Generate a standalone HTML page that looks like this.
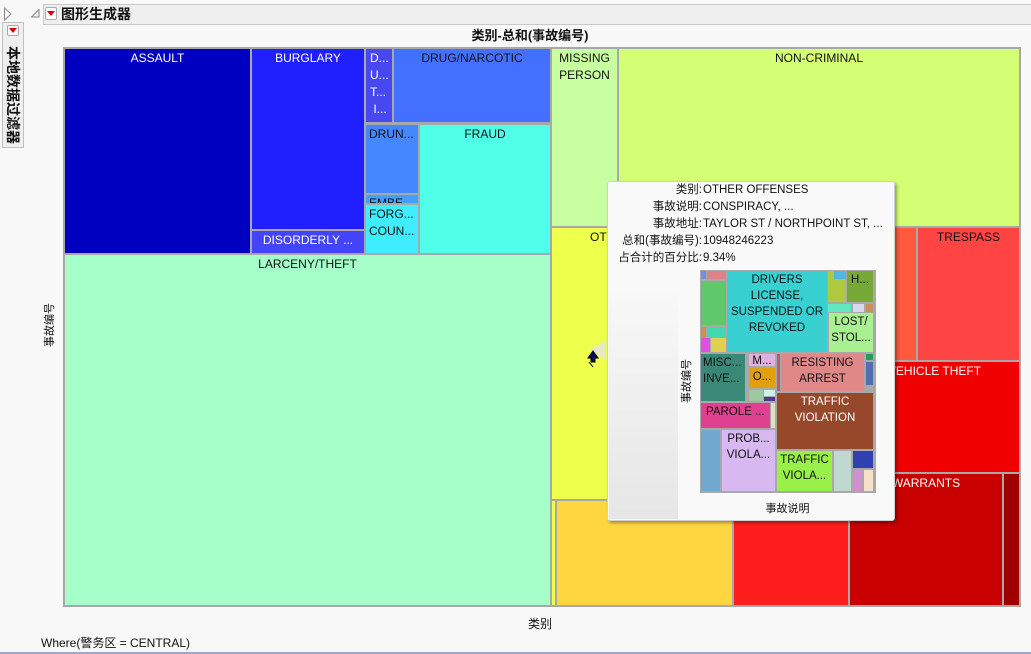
<!DOCTYPE html>
<html><head><meta charset="utf-8"><style>
*{margin:0;padding:0;box-sizing:border-box}
body{width:1031px;height:654px;background:#f8f8f8;position:relative;overflow:hidden;font-family:"Liberation Sans","Noto Sans CJK SC",sans-serif;font-size:12px;color:#111}
.a{position:absolute}
.c{position:absolute;text-align:center;line-height:17px;padding-top:1px;overflow:hidden;white-space:nowrap}
.w{color:#fff}
.t{font-size:11.5px;line-height:16px}
</style></head><body>
<!-- header -->
<svg class="a" style="left:3px;top:7px" width="10" height="14"><path d="M1.5 1 L8 7 L1.5 13 Z" fill="#fff" stroke="#888"/></svg>
<div class="a" style="left:43px;top:4px;width:990px;height:21px;background:#efefef;border:1px solid #c8c8c8"></div>
<svg class="a" style="left:31px;top:9px" width="9" height="9"><path d="M8 0.5 L8 8 L0.5 8 Z" fill="#eee" stroke="#888"/></svg>
<div class="a" style="left:45px;top:7px;width:12px;height:13px;background:#fff;border:1px solid #aaa;border-radius:2px"></div>
<div class="a" style="left:47px;top:11px;width:0;height:0;border-top:5px solid #d00;border-left:4px solid transparent;border-right:4px solid transparent"></div>
<div class="a" style="left:61px;top:5px;font-size:14px;font-weight:bold;line-height:18px">图形生成器</div>
<!-- left filter button -->
<div class="a" style="left:2px;top:22px;width:22px;height:126px;background:#efefef;border:1px solid #c0c0c0"></div>
<div class="a" style="left:7px;top:25px;width:12px;height:11px;background:#fff;border:1px solid #aaa;border-radius:2px"></div>
<div class="a" style="left:9px;top:28px;width:0;height:0;border-top:5px solid #d00;border-left:4px solid transparent;border-right:4px solid transparent"></div>
<div class="a" style="left:-42px;top:80px;width:110px;height:18px;font-size:14px;font-weight:bold;line-height:18px;transform:rotate(90deg);white-space:nowrap;text-align:right">本地数据过滤器</div>
<!-- title -->
<div class="a" style="left:300px;top:27px;width:460px;text-align:center;font-size:13px;font-weight:bold;line-height:18px">类别-总和(事故编号)</div>
<!-- plot -->
<div class="a" style="left:63px;top:47px;width:958px;height:560px;background:#a8a8a8"></div>
<div class="c w" style="left:65px;top:49px;width:185px;height:204px;background:#0000c0">ASSAULT</div>
<div class="c w" style="left:252px;top:49px;width:112px;height:180px;background:#2020ff">BURGLARY</div>
<div class="c w" style="left:252px;top:231px;width:112px;height:22px;background:#4444ff">DISORDERLY ...</div>
<div class="c w" style="left:366px;top:49px;width:26px;height:73px;background:#4848f0;text-align:left;padding-left:4px">D...<br>U...<br>T...<br>&nbsp;I...</div>
<div class="c" style="left:394px;top:49px;width:156px;height:73px;background:#4470ff">DRUG/NARCOTIC</div>
<div class="c" style="left:366px;top:125px;width:52px;height:68px;background:#4488ff;text-align:left;padding-left:3px">DRUN...</div>
<div class="c" style="left:366px;top:195px;width:52px;height:8px;background:#44a0ff;line-height:14px;text-align:left;padding-left:3px">EMBE</div>
<div class="c" style="left:366px;top:205px;width:52px;height:48px;background:#40ecff;text-align:left;padding-left:3px">FORG...<br>COUN...</div>
<div class="c" style="left:420px;top:125px;width:130px;height:128px;background:#50ffe8">FRAUD</div>
<div class="c" style="left:65px;top:255px;width:485px;height:350px;background:#a4ffc8">LARCENY/THEFT</div>
<div class="c" style="left:552px;top:49px;width:65px;height:177px;background:#c8ffa0">MISSING<br>PERSON</div>
<div class="c" style="left:619px;top:49px;width:400px;height:177px;background:#d4ff74">NON-CRIMINAL</div>
<div class="c" style="left:552px;top:228px;width:340px;height:271px;background:#eeff4c;text-align:left;padding-left:38px">OTHER</div>
<div class="c" style="left:894px;top:228px;width:22px;height:132px;background:#ff5a3c"></div>
<div class="c" style="left:918px;top:228px;width:101px;height:132px;background:#ff4444">TRESPASS</div>
<div class="c w" style="left:850px;top:362px;width:169px;height:110px;background:#f00000">VEHICLE THEFT</div>
<div class="c w" style="left:850px;top:474px;width:152px;height:131px;background:#c80000">WARRANTS</div>
<div class="c" style="left:1004px;top:474px;width:15px;height:131px;background:#a00000"></div>
<div class="c" style="left:552px;top:501px;width:3px;height:104px;background:#eeff4c"></div>
<div class="c" style="left:557px;top:501px;width:175px;height:104px;background:#ffd640"></div>
<div class="c" style="left:734px;top:501px;width:114px;height:104px;background:#ff1e1e"></div>
<!-- axis labels -->
<div class="a" style="left:20px;top:318px;width:60px;text-align:center;transform:rotate(-90deg);font-size:11px;line-height:14px">事故编号</div>
<div class="a" style="left:520px;top:615px;width:40px;text-align:center;font-size:12px">类别</div>
<div class="a" style="left:41px;top:634px;font-size:12px">Where(警务区 = CENTRAL)</div>
<div class="a" style="left:0;top:652px;width:1031px;height:2px;background:#a0a8c8"></div>
<!-- tooltip -->
<div class="a" style="left:590px;top:340px;width:0;height:0;border-right:16px solid #e8e8c8;border-top:10px solid transparent;border-bottom:10px solid transparent"></div>
<div class="a" style="left:607px;top:181px;width:288px;height:340px;background:#f9f9f9;border:1px solid #d0d0d0;border-radius:3px;box-shadow:2px 2px 3px rgba(0,0,0,.35)"></div>
<div class="a" style="left:609px;top:290px;width:69px;height:229px;background:linear-gradient(#f8f8f8,#e6e6e6)"></div>
<div class="a" style="left:609px;top:182px;width:285px;font-size:11.5px;line-height:17px">
<div style="position:absolute;left:0;width:93px;text-align:right">类别:<br>事故说明:<br>事故地址:<br>总和(事故编号):<br>占合计的百分比:</div>
<div style="position:absolute;left:94px;white-space:nowrap">OTHER OFFENSES<br>CONSPIRACY, ...<br>TAYLOR ST / NORTHPOINT ST, ...<br>10948246223<br>9.34%</div></div>
<div class="a" style="left:657px;top:374px;width:60px;text-align:center;transform:rotate(-90deg);font-size:11px;line-height:14px">事故编号</div>
<div class="a" style="left:750px;top:500px;width:75px;text-align:center;font-size:11px">事故说明</div>
<!-- inner treemap -->
<div class="a" style="left:700px;top:270px;width:176px;height:223px;background:#a8a8a8"></div>
<div class="a" style="left:701px;top:271px;width:5px;height:8px;background:#7090e0"></div>
<div class="a" style="left:707px;top:271px;width:19px;height:8px;background:#e08088"></div>
<div class="a" style="left:701px;top:281px;width:25px;height:44px;background:#5fc86a"></div>
<div class="a" style="left:701px;top:327px;width:5px;height:24px;background:#d09050"></div>
<div class="a" style="left:707px;top:327px;width:19px;height:10px;background:#40d8b0"></div>
<div class="a" style="left:701px;top:338px;width:9px;height:14px;background:#e050e0"></div>
<div class="a" style="left:711px;top:338px;width:15px;height:14px;background:#e0d050"></div>
<div class="c t" style="left:727px;top:271px;width:100px;height:81px;background:#38d0d0">DRIVERS<br>LICENSE,<br>SUSPENDED OR<br>REVOKED</div>
<div class="a" style="left:828px;top:271px;width:18px;height:31px;background:#b0c840"></div>
<div class="a" style="left:834px;top:271px;width:12px;height:8px;background:#50b8e0"></div>
<div class="c t" style="left:847px;top:271px;width:26px;height:31px;background:#78a838">H...</div>
<div class="a" style="left:828px;top:304px;width:23px;height:8px;background:#60e8c0"></div>
<div class="a" style="left:853px;top:304px;width:11px;height:8px;background:#d8d8f0"></div>
<div class="a" style="left:866px;top:304px;width:7px;height:8px;background:#c89060"></div>
<div class="c t" style="left:829px;top:313px;width:44px;height:39px;background:#a8f090">LOST/<br>STOL...</div>
<div class="c t" style="left:701px;top:354px;width:44px;height:47px;background:#3a8878;text-align:left;padding-left:2px">MISC...<br>INVE...</div>
<div class="c t" style="left:749px;top:354px;width:26px;height:12px;background:#e0b0e0;line-height:12px">M...</div>
<div class="c t" style="left:749px;top:368px;width:26px;height:20px;background:#e0a010">O...</div>
<div class="a" style="left:749px;top:390px;width:14px;height:11px;background:#a0c8a0"></div>
<div class="a" style="left:764px;top:390px;width:11px;height:6px;background:#d0f0f0"></div>
<div class="a" style="left:764px;top:397px;width:11px;height:4px;background:#503890"></div>
<div class="a" style="left:777px;top:354px;width:3px;height:37px;background:#b06070"></div>
<div class="c t" style="left:781px;top:354px;width:83px;height:37px;background:#e08888">RESISTING<br>ARREST</div>
<div class="a" style="left:866px;top:354px;width:7px;height:6px;background:#20a050"></div>
<div class="a" style="left:866px;top:362px;width:7px;height:23px;background:#5070b0"></div>
<div class="c t" style="left:701px;top:403px;width:69px;height:25px;background:#e04090;text-align:left;padding-left:5px">PAROLE ...</div>
<div class="a" style="left:771px;top:403px;width:4px;height:25px;background:#e0e0c0"></div>
<div class="c t w" style="left:777px;top:393px;width:96px;height:56px;background:#98482a">TRAFFIC<br>VIOLATION</div>
<div class="a" style="left:701px;top:430px;width:19px;height:61px;background:#70a8d0"></div>
<div class="c t" style="left:722px;top:430px;width:53px;height:61px;background:#d8b8f0">PROB...<br>VIOLA...</div>
<div class="c t" style="left:777px;top:451px;width:55px;height:40px;background:#98f048">TRAFFIC<br>VIOLA...</div>
<div class="a" style="left:834px;top:451px;width:17px;height:40px;background:#c0d8d0"></div>
<div class="a" style="left:853px;top:451px;width:20px;height:17px;background:#3040b0"></div>
<div class="a" style="left:853px;top:470px;width:9px;height:21px;background:#d090d0"></div>
<div class="a" style="left:864px;top:470px;width:9px;height:21px;background:#f8e0c8"></div>
<!-- cursor -->
<svg class="a" style="left:587px;top:350px" width="12" height="18" viewBox="0 0 12 18"><path d="M6 1 L11 8 L8 8 L8 12 L4 12 L4 8 L1 8 Z M2 12 L6 17" fill="#0a0a60" stroke="#000" stroke-width="1"/></svg>
</body></html>
